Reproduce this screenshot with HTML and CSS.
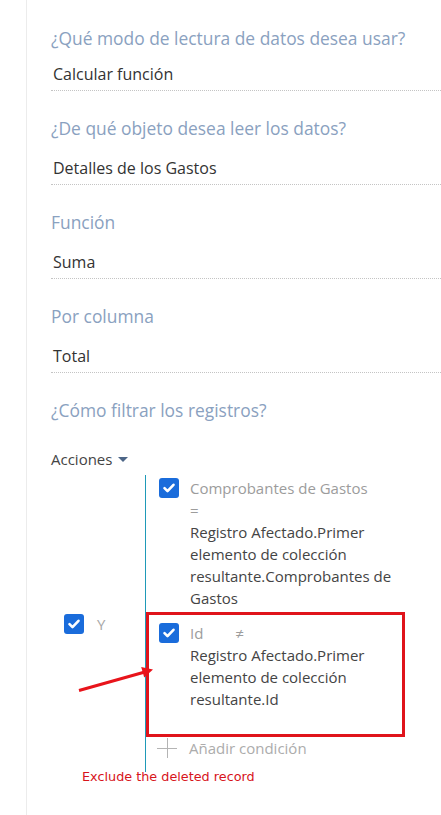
FILE: index.html
```html
<!DOCTYPE html>
<html lang="es">
<head>
    <meta charset="UTF-8">
    <meta name="viewport" content="width=device-width, initial-scale=1.0">
    <title>Leer datos</title>
    <link rel="stylesheet" href="styles.css">
</head>
<body>

<div class="page">
    <div class="panel">

        <div class="field field-first">
            <div class="field-label">¿Qué modo de lectura de datos desea usar?</div>
            <div class="field-value">Calcular función</div>
        </div>

        <div class="field">
            <div class="field-label">¿De qué objeto desea leer los datos?</div>
            <div class="field-value">Detalles de los Gastos</div>
        </div>

        <div class="field">
            <div class="field-label">Función</div>
            <div class="field-value">Suma</div>
        </div>

        <div class="field">
            <div class="field-label">Por columna</div>
            <div class="field-value">Total</div>
        </div>

        <div class="filter">
            <div class="field-label">¿Cómo filtrar los registros?</div>
            <div class="actions">Acciones <span class="caret"></span></div>

            <div class="group">
                <div class="group-head">
                    <span class="checkbox">
                        <svg viewBox="0 0 20 20" width="20" height="20"><path d="M5.5 10.2l3 3 6-6.4" fill="none" stroke="#fff" stroke-width="2.6" stroke-linecap="round" stroke-linejoin="round"/></svg>
                    </span>
                    <span class="group-op">Y</span>
                </div>

                <div class="conditions">
                    <div class="condition">
                        <span class="checkbox">
                            <svg viewBox="0 0 20 20" width="20" height="20"><path d="M5.5 10.2l3 3 6-6.4" fill="none" stroke="#fff" stroke-width="2.6" stroke-linecap="round" stroke-linejoin="round"/></svg>
                        </span>
                        <div class="condition-body">
                            <span class="cond-column">Comprobantes de Gastos</span>
                            <span class="cond-op">=</span>
                            <div class="cond-value">Registro Afectado.Primer elemento de colección resultante.Comprobantes de Gastos</div>
                        </div>
                    </div>

                    <div class="condition condition-marked">
                        <span class="checkbox">
                            <svg viewBox="0 0 20 20" width="20" height="20"><path d="M5.5 10.2l3 3 6-6.4" fill="none" stroke="#fff" stroke-width="2.6" stroke-linecap="round" stroke-linejoin="round"/></svg>
                        </span>
                        <div class="condition-body">
                            <span class="cond-column">Id</span>
                            <span class="cond-op">≠</span>
                            <div class="cond-value">Registro Afectado.Primer elemento de colección resultante.Id</div>
                        </div>
                    </div>

                    <div class="add-condition">
                        <span class="plus"></span>
                        Añadir condición
                    </div>
                </div>
            </div>

            <div class="note">Exclude the deleted record</div>
        </div>

    </div>

    <!-- annotation arrow -->
    <svg class="arrow" width="441" height="815" viewBox="0 0 441 815">
        <line x1="79" y1="690.5" x2="144" y2="672.3" stroke="#e8141b" stroke-width="3"/>
        <polygon points="153,669.5 141.2,666.9 144.2,677.5" fill="#e8141b"/>
    </svg>
</div>

</body>
</html>
```

FILE: styles.css
```css
/* General Styles */
body {
    margin: 0;
    background: #fff;
    font-family: "Open Sans", Arial, sans-serif;
    color: #333;
}
.page {
    position: relative;
    width: 441px;
    height: 815px;
    overflow: hidden;
}
.panel {
    margin-left: 26px;
    border-left: 1px solid #ececec;
    padding-left: 24px;
    height: 815px;
    box-sizing: border-box;
}

/* Fields */
.field {
    padding-top: 25px;
    padding-bottom: 4px;
    border-bottom: 1px dotted #c4c4c4;
}
.field-first {
    padding-top: 26px;
}
.field-label {
    font-size: 17.4px;
    line-height: 24px;
    color: #8aa1c0;
    white-space: nowrap;
}
.field-value {
    margin-top: 16px;
    padding-left: 2px;
    font-size: 16px;
    line-height: 24px;
    color: #333;
}
.field-first .field-value {
    margin-top: 12px;
}

/* Filter */
.filter {
    padding-top: 25px;
}
.actions {
    margin-top: 27px;
    margin-bottom: 6px;
    font-size: 15px;
    line-height: 20px;
    color: #444;
    display: flex;
    align-items: center;
}
.caret {
    display: inline-block;
    margin-left: 6px;
    margin-top: 1px;
    border-top: 5px solid #4d6687;
    border-left: 5px solid transparent;
    border-right: 5px solid transparent;
}
.checkbox {
    flex: none;
    display: block;
    width: 20px;
    height: 20px;
    border-radius: 3px;
    background: #1a6cdb;
}
.checkbox svg {
    display: block;
}
.group {
    display: flex;
}
.group-head {
    width: 94px;
    flex: none;
    display: flex;
    align-items: center;
    padding-left: 13px;
    box-sizing: border-box;
}
.group-op {
    margin-left: 13px;
    font-size: 15px;
    color: #a8a8a8;
    line-height: 20px;
}
.conditions {
    border-left: 1px solid #1f9ab8;
    padding-top: 2px;
    padding-bottom: 13px;
}
.condition {
    display: flex;
    width: 259px;
    box-sizing: border-box;
    padding: 0 10px 0 13px;
    font-size: 15px;
    line-height: 22px;
}
.condition .checkbox {
    margin-top: 1px;
    margin-right: 11px;
}
.condition-body {
    flex: 1;
    min-width: 0;
}
.cond-column {
    display: inline-block;
    margin-right: 28px;
    white-space: nowrap;
    color: #9c9c9c;
}
.cond-op {
    display: inline-block;
    color: #9c9c9c;
}
.cond-value {
    color: #444;
}
.condition-marked {
    margin-top: 3px;
    border: 3px solid #e0141b;
    padding: 7px 10px 24px 10px;
}
.add-condition {
    display: flex;
    align-items: center;
    padding-left: 11px;
    font-size: 15px;
    line-height: 22px;
    color: #acacac;
}
.plus {
    position: relative;
    width: 20px;
    height: 20px;
    margin-right: 12px;
}
.plus::before,
.plus::after {
    content: "";
    position: absolute;
    background: #b4b4b4;
}
.plus::before {
    left: 0;
    right: 0;
    top: 10px;
    height: 1px;
}
.plus::after {
    top: 0;
    bottom: 0;
    left: 10px;
    width: 1px;
}
.note {
    margin-top: -3px;
    padding-left: 31px;
    font-family: "DejaVu Sans", Verdana, sans-serif;
    font-size: 12.8px;
    line-height: 16px;
    color: #d7141b;
}
.arrow {
    position: absolute;
    left: 0;
    top: 0;
    pointer-events: none;
}
```
